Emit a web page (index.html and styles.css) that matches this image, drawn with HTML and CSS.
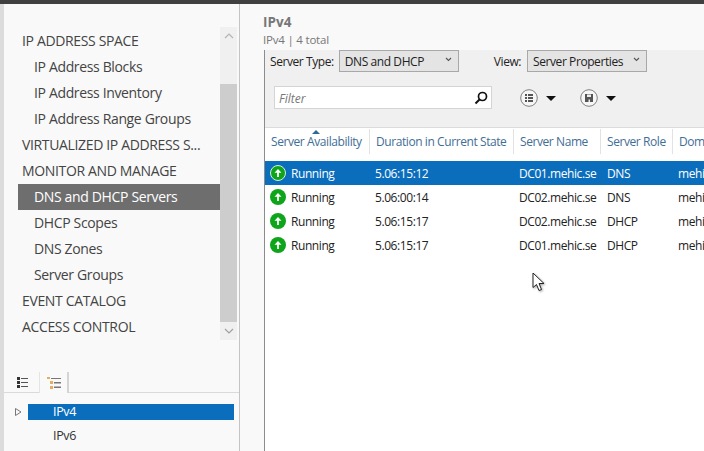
FILE: index.html
```html
<!DOCTYPE html>
<html>
<head>
    <title>IPv4</title>
    <link rel="stylesheet" href="styles.css">
</head>
<body>
    <div class="topbar"></div>
    <div class="window">
        <div class="sidebar">
            <div class="nav-area">
                <ul class="nav">
                    <li>IP ADDRESS SPACE</li>
                    <li class="sub">IP Address Blocks</li>
                    <li class="sub">IP Address Inventory</li>
                    <li class="sub">IP Address Range Groups</li>
                    <li>VIRTUALIZED IP ADDRESS S...</li>
                    <li>MONITOR AND MANAGE</li>
                    <li class="sub active">DNS and DHCP Servers</li>
                    <li class="sub">DHCP Scopes</li>
                    <li class="sub">DNS Zones</li>
                    <li class="sub">Server Groups</li>
                    <li>EVENT CATALOG</li>
                    <li>ACCESS CONTROL</li>
                </ul>
                <div class="scrollbar">
                    <div class="scroll-btn scroll-up">
                        <svg width="10" height="6" viewBox="0 0 10 6"><path d="M1 5 L5 1 L9 5" fill="none" stroke="#b4b4b4" stroke-width="1.2"/></svg>
                    </div>
                    <div class="scroll-thumb"></div>
                    <div class="scroll-btn">
                        <svg width="10" height="6" viewBox="0 0 10 6"><path d="M1 1 L5 5 L9 1" fill="none" stroke="#a0a0a0" stroke-width="1.2"/></svg>
                    </div>
                </div>
            </div>
            <div class="tabs">
                <div class="tab">
                    <svg width="11" height="11" viewBox="0 0 11 11">
                        <path d="M0 0h3v3H0zM0 4h3v3H0zM0 8h3v3H0z" fill="#333"/>
                        <path d="M4 1h7v1H4zM4 5h7v1H4zM4 9h7v1H4z" fill="#555"/>
                    </svg>
                </div>
                <div class="tab tab-on">
                    <svg width="14" height="12" viewBox="0 0 14 12">
                        <path d="M0 0h3v2H0zM3 4h3v3H3zM3 9h3v3H3z" fill="#e0b060"/>
                        <path d="M4 1h10v1H4zM7 5h7v1.500H7zM7 9.500h7V11H7z" fill="#777"/>
                    </svg>
                </div>
            </div>
            <div class="tree">
                <div class="tree-row">
                    <svg class="tree-arrow" width="7" height="8" viewBox="0 0 7 8"><path d="M.5 .5 L6 4 L.5 7.500Z" fill="none" stroke="#777"/></svg>
                    <div class="tree-label tree-selected">IPv4</div>
                </div>
                <div class="tree-row">
                    <div class="tree-label">IPv6</div>
                </div>
            </div>
        </div>
        <div class="main">
            <div class="heading">
                <div class="title">IPv4</div>
                <div class="subtitle">IPv4 | 4 total</div>
            </div>
            <div class="content">
                <div class="toolbar">
                    <div class="selectors">
                        <span class="sel-label">Server Type:</span>
                        <div class="select select-type">DNS and DHCP
                            <svg width="7" height="5" viewBox="0 0 7 5"><path d="M1 1 L3.500 3.500 L6 1" fill="none" stroke="#555" stroke-width="1.100"/></svg>
                        </div>
                        <span class="sel-label view-label">View:</span>
                        <div class="select select-view">Server Properties
                            <svg width="7" height="5" viewBox="0 0 7 5"><path d="M1 1 L3.500 3.500 L6 1" fill="none" stroke="#555" stroke-width="1.100"/></svg>
                        </div>
                    </div>
                    <div class="filter-row">
                        <div class="filter">
                            <span class="filter-text">Filter</span>
                            <svg width="14" height="14" viewBox="0 0 14 14"><circle cx="8.500" cy="5.500" r="4" fill="none" stroke="#111" stroke-width="1.700"/><path d="M5.500 8.500 L1.500 12.500" stroke="#111" stroke-width="2"/></svg>
                        </div>
                        <svg class="round-icon" width="18" height="18" viewBox="0 0 18 18">
                            <circle cx="9" cy="9" r="8.300" fill="#f6f6f6" stroke="#808080"/>
                            <path d="M5 5h2v2H5zM5 8h2v2H5zM5 11h2v2H5zM8 5h5v2H8zM8 8h5v2H8zM8 11h5v2H8z" fill="#555"/>
                        </svg>
                        <div class="caret"></div>
                        <svg class="round-icon save-icon" width="18" height="18" viewBox="0 0 18 18">
                            <circle cx="9" cy="9" r="8.300" fill="#f6f6f6" stroke="#808080"/>
                            <path d="M5 5h8v8H5z" fill="#555"/>
                            <path d="M7 5.500h4v2.500H7zM8.500 10.500h1.500V13H8.500z" fill="#eee"/>
                        </svg>
                        <div class="caret"></div>
                    </div>
                </div>
                <div class="grid">
                    <div class="grid-head">
                        <div class="col col-1 head-cell">Server Availability<span class="sort-mark"></span></div>
                        <div class="col col-2 head-cell">Duration in Current State</div>
                        <div class="col col-3 head-cell">Server Name</div>
                        <div class="col col-4 head-cell">Server Role</div>
                        <div class="col col-5 head-cell">Domain</div>
                    </div>
                    <div class="grid-body">
                        <div class="row row-selected">
                            <div class="col col-1"><span class="status status-ring"><svg width="10" height="10" viewBox="0 0 10 10"><path d="M5 1 L8.500 4.800 H5.900 V9 H4.100 V4.800 H1.500Z" fill="#fff"/></svg></span>Running</div>
                            <div class="col col-2">5.06:15:12</div>
                            <div class="col col-3">DC01.mehic.se</div>
                            <div class="col col-4">DNS</div>
                            <div class="col col-5">mehic.se</div>
                        </div>
                        <div class="row">
                            <div class="col col-1"><span class="status"><svg width="10" height="10" viewBox="0 0 10 10"><path d="M5 1 L8.500 4.800 H5.900 V9 H4.100 V4.800 H1.500Z" fill="#fff"/></svg></span>Running</div>
                            <div class="col col-2">5.06:00:14</div>
                            <div class="col col-3">DC02.mehic.se</div>
                            <div class="col col-4">DNS</div>
                            <div class="col col-5">mehic.se</div>
                        </div>
                        <div class="row">
                            <div class="col col-1"><span class="status"><svg width="10" height="10" viewBox="0 0 10 10"><path d="M5 1 L8.500 4.800 H5.900 V9 H4.100 V4.800 H1.500Z" fill="#fff"/></svg></span>Running</div>
                            <div class="col col-2">5.06:15:17</div>
                            <div class="col col-3">DC02.mehic.se</div>
                            <div class="col col-4">DHCP</div>
                            <div class="col col-5">mehic.se</div>
                        </div>
                        <div class="row">
                            <div class="col col-1"><span class="status"><svg width="10" height="10" viewBox="0 0 10 10"><path d="M5 1 L8.500 4.800 H5.900 V9 H4.100 V4.800 H1.500Z" fill="#fff"/></svg></span>Running</div>
                            <div class="col col-2">5.06:15:17</div>
                            <div class="col col-3">DC01.mehic.se</div>
                            <div class="col col-4">DHCP</div>
                            <div class="col col-5">mehic.se</div>
                        </div>
                    </div>
                </div>
            </div>
        </div>
    </div>
    <svg class="pointer" width="14" height="20" viewBox="0 0 14 20">
        <path d="M1 1 V15.500 L4.500 12.500 L7 18.500 L9.500 17.500 L7 11.500 H12Z" fill="#fff" stroke="#222" stroke-width="1"/>
    </svg>
</body>
</html>
```

FILE: styles.css
```css
html, body {
    margin: 0;
    padding: 0;
}

body {
    width: 704px;
    height: 451px;
    overflow: hidden;
    position: relative;
    font-family: "Open Sans", "Noto Sans", sans-serif;
    font-size: 12px;
    color: #333;
    background-color: #f9f9f9;
}

.topbar {
    height: 4px;
    background-color: #404040;
}

.window {
    display: flex;
    height: 447px;
}

/* Left side */
.sidebar {
    width: 235px;
    flex-shrink: 0;
    margin-left: 4px;
    border-right: 1px solid #c4c4c4;
    box-shadow: -4px 0 0 #dcdcdc;
    display: flex;
    flex-direction: column;
}

.nav-area {
    display: flex;
    height: 356px;
    padding-top: 23px;
    box-sizing: border-box;
    flex-shrink: 0;
}

.nav {
    list-style: none;
    margin: 0;
    padding: 1px 0 0 14px;
    width: 202px;
    flex-shrink: 0;
    font-size: 14px;
    letter-spacing: -0.35px;
    color: #444;
}

.nav li {
    height: 26px;
    line-height: 26px;
    padding-left: 4px;
    white-space: nowrap;
}

.nav .sub {
    padding-left: 16px;
}

.nav .active {
    background-color: #6e6e6e;
    color: #fff;
}

.scrollbar {
    width: 17px;
    height: 313px;
    display: flex;
    flex-direction: column;
    background-color: #f0f0f0;
}

.scroll-btn {
    height: 18px;
    display: flex;
    align-items: center;
    justify-content: center;
}

.scroll-up {
    height: 57px;
    align-items: flex-start;
    padding-top: 6px;
    box-sizing: border-box;
}

.scroll-thumb {
    height: 238px;
    background-color: #cdcdcd;
}

.tabs {
    display: flex;
    height: 33px;
    flex-shrink: 0;
    padding-left: 1px;
    box-sizing: border-box;
    border-bottom: 1px solid #dadada;
    align-items: flex-end;
}

.tab {
    width: 34px;
    height: 20px;
    display: flex;
    align-items: center;
    justify-content: center;
}

.tab-on {
    width: 30px;
    height: 21px;
    margin-bottom: -1px;
    border-left: 1px solid #e4e4e4;
    border-right: 2px solid #d4d4d4;
    box-sizing: border-box;
    background-color: #f9f9f9;
}

.tree {
    padding-top: 11px;
}

.tree-row {
    height: 24px;
    display: flex;
    align-items: flex-start;
    padding-left: 24px;
    position: relative;
}

.tree-arrow {
    position: absolute;
    left: 11px;
    top: 4px;
}

.tree-label {
    width: 206px;
    height: 16px;
    line-height: 16px;
    padding-left: 25px;
    box-sizing: border-box;
    font-size: 12.500px;
    letter-spacing: -0.35px;
}

.tree-selected {
    background-color: #0a6ebd;
    color: #fff;
}

/* Right side */
.main {
    flex: 1;
    min-width: 0;
    display: flex;
    flex-direction: column;
}

.heading {
    height: 46px;
    padding: 10px 0 0 23px;
    box-sizing: border-box;
    color: #777;
    flex-shrink: 0;
}

.title {
    font-weight: bold;
    font-size: 13.500px;
    line-height: 17px;
}

.subtitle {
    font-size: 11.500px;
    letter-spacing: -0.2px;
    line-height: 17px;
}

.content {
    flex: 1;
    margin-left: 24px;
    border-left: 1px solid #8c8c8c;
    background-color: #fff;
    min-height: 0;
}

.toolbar {
    height: 78px;
    background-color: #f0f0f0;
    border-bottom: 1px solid #dcdcdc;
    box-sizing: border-box;
    padding-left: 5px;
}

.selectors {
    display: flex;
    align-items: center;
    height: 22px;
    font-size: 12px;
    letter-spacing: -0.42px;
    color: #222;
}

.sel-label {
    margin-right: 5px;
}

.view-label {
    margin-left: 35px;
    margin-right: 6px;
}

.select {
    height: 22px;
    box-sizing: border-box;
    border: 1px solid #a8a8a8;
    background-color: #e4e4e4;
    display: flex;
    align-items: center;
    justify-content: space-between;
    padding: 0 6px 0 5px;
    white-space: nowrap;
}

.select svg {
    margin-top: -4px;
}

.select-type {
    width: 120px;
}

.select-view {
    width: 120px;
}

.filter-row {
    display: flex;
    align-items: center;
    margin-top: 14px;
    padding-left: 4px;
}

.filter {
    width: 218px;
    height: 23px;
    box-sizing: border-box;
    background-color: #fff;
    border: 1px solid #d4d4d4;
    display: flex;
    align-items: center;
    justify-content: space-between;
    padding: 0 3px 0 4px;
    font-style: italic;
    font-size: 12px;
    color: #777;
}

.filter-text {
    padding-top: 2px;
}

.round-icon {
    margin-left: 28px;
    margin-top: 1px;
}

.save-icon {
    margin-left: 24px;
}

.caret {
    width: 0;
    height: 0;
    margin-left: 8px;
    margin-top: 1px;
    border-left: 5px solid transparent;
    border-right: 5px solid transparent;
    border-top: 5px solid #111;
}

.grid-head {
    display: flex;
    height: 33px;
    padding-top: 1px;
    box-sizing: border-box;
    color: #3f6e96;
    font-size: 12px;
    letter-spacing: -0.42px;
}

.grid-body {
    font-size: 12px;
    letter-spacing: -0.42px;
    color: #222;
}

.row {
    display: flex;
    height: 24px;
    line-height: 25px;
    white-space: nowrap;
}

.col {
    flex-shrink: 0;
    box-sizing: border-box;
    padding-left: 5px;
    white-space: nowrap;
    overflow: hidden;
}

.col-1 { width: 105px; display: flex; align-items: center; }
.col-2 { width: 144px; }
.col-3 { width: 87px; }
.col-4 { width: 72px; padding-left: 6px; }
.col-5 { width: 60px; }

.head-cell {
    height: 25px;
    line-height: 25px;
    padding-left: 6px;
    border-right: 1px solid #e2e2e2;
    position: relative;
    overflow: visible;
}

.sort-mark {
    position: absolute;
    left: 47px;
    top: 1px;
    width: 0;
    height: 0;
    border-left: 4px solid transparent;
    border-right: 4px solid transparent;
    border-bottom: 4px solid #2c6a9a;
}

.row-selected {
    background-color: #0a6ebd;
    color: #fff;
}

.status {
    width: 16px;
    height: 16px;
    border-radius: 50%;
    background-color: #0ea51a;
    display: flex;
    align-items: center;
    justify-content: center;
    margin-right: 5px;
    flex-shrink: 0;
}

.status-ring {
    box-sizing: border-box;
    border: 1px solid #d8f0d8;
}

.pointer {
    position: absolute;
    left: 532px;
    top: 272px;
    filter: drop-shadow(1px 1px 1px rgba(0, 0, 0, 0.35));
}
```
